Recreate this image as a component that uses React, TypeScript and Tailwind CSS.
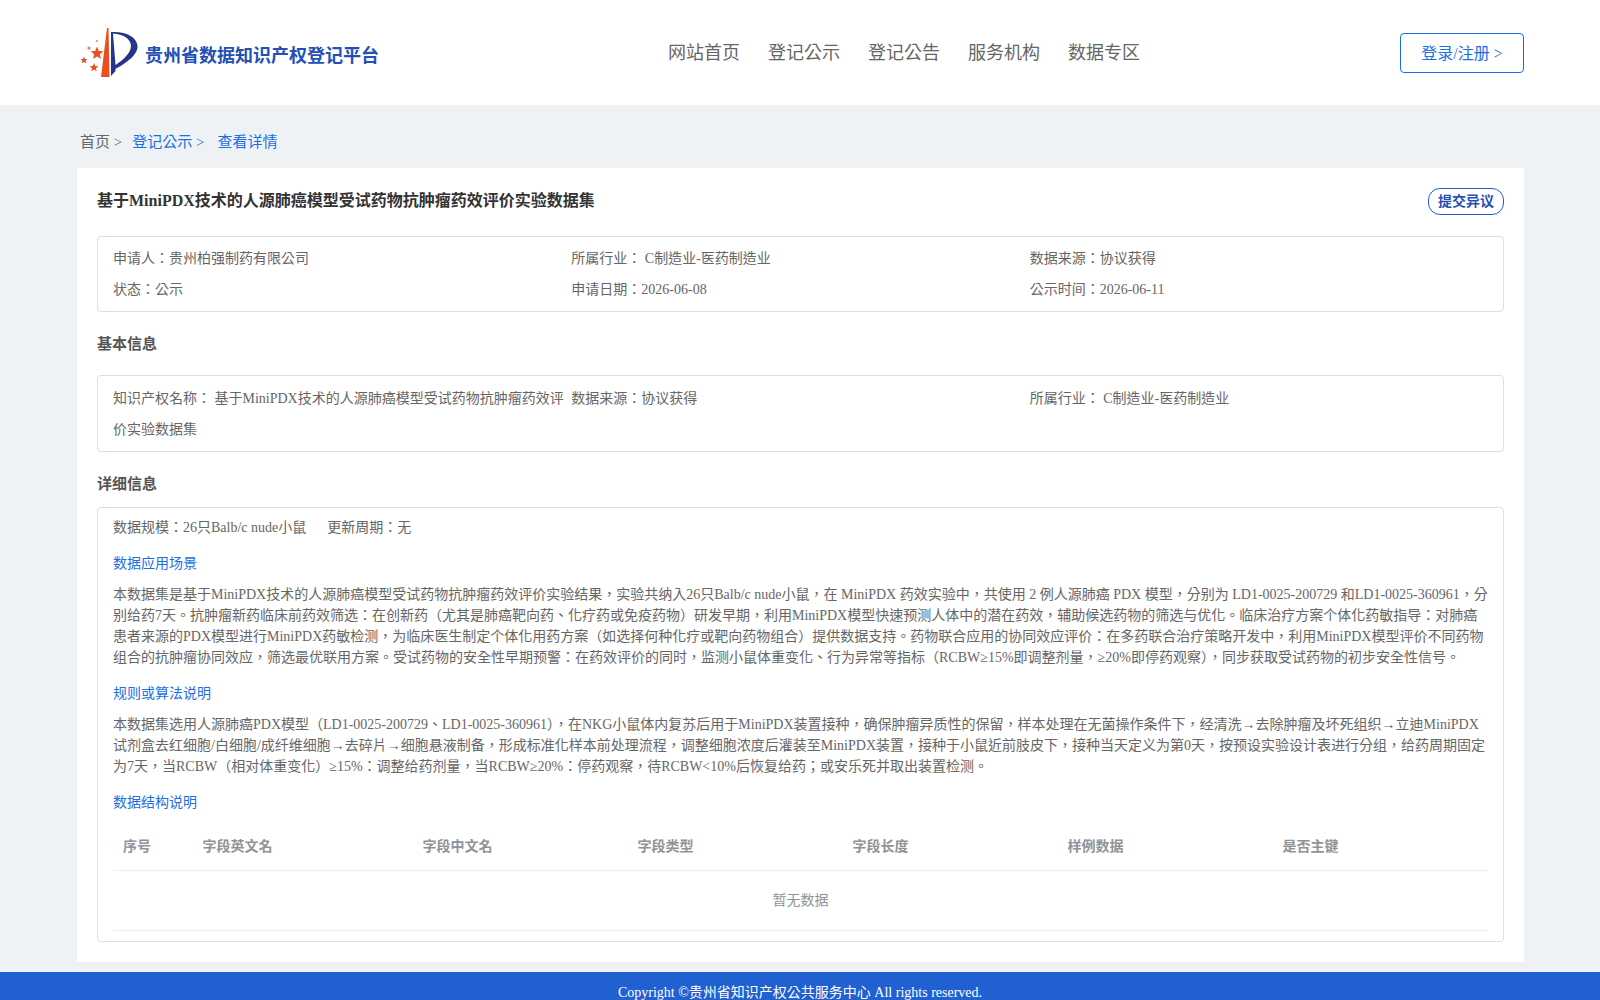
import React from "react";

const fontStack = { fontFamily: '"Liberation Serif", "Noto Sans CJK TC", serif' };

const navItems = ["网站首页", "登记公示", "登记公告", "服务机构", "数据专区"];
const columns = [
  { name: "序号", width: "w-[79.5px]" },
  { name: "字段英文名", width: "w-[220px]" },
  { name: "字段中文名", width: "w-[215px]" },
  { name: "字段类型", width: "w-[215px]" },
  { name: "字段长度", width: "w-[215px]" },
  { name: "样例数据", width: "w-[215px]" },
  { name: "是否主键", width: "flex-1" },
];

const Logo = () => (
  <svg width="58" height="50" viewBox="0 0 58 50" className="shrink-0">
    <path d="M21 50 L27 1 L28.5 1 L29.5 50 Z" fill="#e8501f" />
    <path
      d="M31 5 C46 4 57 10 57.5 19 C58 28 46 36 35.5 42 L35.5 44 L31 49 Z M33 6.5 L35.5 38 C43 33 51 26 51 19 C51 12 43 7 33 6.5 Z"
      fill="#26358c"
      fillRule="evenodd"
    />
    <polygon points="17,19.5 18.8,24 23.5,24.3 19.8,27.3 21,32 17,29.4 13,32 14.2,27.3 10.5,24.3 15.2,24" fill="#e8501f" />
    <polygon points="4,29.5 5,32 7.6,32.2 5.6,33.8 6.2,36.3 4,34.9 1.8,36.3 2.4,33.8 0.4,32.2 3,32" fill="#e8501f" />
    <polygon points="14,36 15.2,39 18.4,39.2 15.9,41.2 16.7,44.3 14,42.6 11.3,44.3 12.1,41.2 9.6,39.2 12.8,39" fill="#e8501f" />
    <circle cx="9" cy="21" r="1.6" fill="#ee7a55" />
    <circle cx="17" cy="14" r="1" fill="#ee7a55" />
  </svg>
);

const Header = () => (
  <header className="flex h-[105px] bg-white pl-[80px] pr-[76px]">
    <div className="flex w-[588px] items-start gap-[7px] pt-[27px]">
      <Logo />
      <span className="mt-[16px] text-[18px] leading-[27px] font-bold text-[#2450b5]">贵州省数据知识产权登记平台</span>
    </div>
    <nav className="flex gap-[28px] pt-[40px] text-[18px] leading-[26px] text-[#666666]">
      {navItems.map((item) => (
        <a key={item}>{item}</a>
      ))}
    </nav>
    <div className="ml-auto pt-[33px]">
      <button className="h-[40px] w-[124px] rounded border border-[#1a6fe3] pt-[1px] text-[16px] text-[#1a6fe3]">登录/注册 &gt;</button>
    </div>
  </header>
);

const InfoBox = ({ children, tall }: { children: React.ReactNode; tall?: boolean }) => (
  <div className={tall ? "grid grid-cols-3 rounded border border-[#dcdfe3] px-[15px] pt-[7px] pb-[6px] text-[14px] leading-[31px] text-[#666666]" : "grid grid-cols-3 rounded border border-[#dcdfe3] px-[15px] py-[6px] text-[14px] leading-[31px] text-[#666666]"}>
    {children}
  </div>
);

const SectionTitle = ({ children }: { children: React.ReactNode }) => (
  <h3 className="text-[15px] leading-[22px] font-bold text-[#555555]">{children}</h3>
);

const BlueLabel = ({ children }: { children: React.ReactNode }) => (
  <div className="text-[14px] leading-[21px] text-[#1a6fe3]">{children}</div>
);

export default function App() {
  return (
    <div className="h-[1000px] overflow-hidden bg-[#eff2f5]" style={fontStack}>
      <Header />
      <div className="pl-[77px] pr-[76px] pt-[26px] pb-[10px]">
        <div className="flex pl-[3px] text-[15px] leading-[23px] text-[#1a6fe3]">
          <span className="mr-[10px] text-[#666666]">首页 &gt;</span>
          <span className="mr-[13px]">登记公示 &gt;</span>
          <span>查看详情</span>
        </div>
        <main className="mt-[14px] bg-white px-[20px] pt-[20px] pb-[20px]">
          <div className="flex items-start justify-between">
            <h2 className="pt-[1px] text-[16px] leading-[24px] font-bold text-[#333333]">基于MiniPDX技术的人源肺癌模型受试药物抗肿瘤药效评价实验数据集</h2>
            <button className="h-[27px] w-[76px] rounded-[12px] border border-[#1a5fd0] text-[14px] font-bold text-[#2450b5]">提交异议</button>
          </div>
          <div className="mt-[21px]">
            <InfoBox>
              <div>申请人：贵州柏强制药有限公司</div>
              <div>所属行业： C制造业-医药制造业</div>
              <div>数据来源：协议获得</div>
              <div>状态：公示</div>
              <div>申请日期：2026-06-08</div>
              <div>公示时间：2026-06-11</div>
            </InfoBox>
          </div>
          <div className="mt-[21px] mb-[20px]">
            <SectionTitle>基本信息</SectionTitle>
          </div>
          <InfoBox tall>
            <div>知识产权名称： 基于MiniPDX技术的人源肺癌模型受试药物抗肿瘤药效评价实验数据集</div>
            <div>数据来源：协议获得</div>
            <div>所属行业： C制造业-医药制造业</div>
          </InfoBox>
          <div className="mt-[21px] mb-[12px]">
            <SectionTitle>详细信息</SectionTitle>
          </div>
          <section className="rounded border border-[#dcdfe3] px-[15px] pt-[9px] pb-[10px] text-[14px] leading-[21px] text-[#666666]">
            <div className="flex gap-[21px]">
              <span>数据规模：26只Balb/c nude小鼠</span>
              <span>更新周期：无</span>
            </div>
            <div className="mt-[15px]">
              <BlueLabel>数据应用场景</BlueLabel>
            </div>
            <p className="mt-[10px]">
              本数据集是基于MiniPDX技术的人源肺癌模型受试药物抗肿瘤药效评价实验结果，实验共纳入26只Balb/c nude小鼠，在 MiniPDX 药效实验中，共使用 2 例人源肺癌 PDX 模型，分别为 LD1-0025-200729 和LD1-0025-360961，分别给药7天。抗肿瘤新药临床前药效筛选：在创新药（尤其是肺癌靶向药、化疗药或免疫药物）研发早期，利用MiniPDX模型快速预测人体中的潜在药效，辅助候选药物的筛选与优化。临床治疗方案个体化药敏指导：对肺癌患者来源的PDX模型进行MiniPDX药敏检测，为临床医生制定个体化用药方案（如选择何种化疗或靶向药物组合）提供数据支持。药物联合应用的协同效应评价：在多药联合治疗策略开发中，利用MiniPDX模型评价不同药物组合的抗肿瘤协同效应，筛选最优联用方案。受试药物的安全性早期预警：在药效评价的同时，监测小鼠体重变化、行为异常等指标（RCBW≥15%即调整剂量，≥20%即停药观察），同步获取受试药物的初步安全性信号。
            </p>
            <div className="mt-[15px]">
              <BlueLabel>规则或算法说明</BlueLabel>
            </div>
            <p className="mt-[10px]">
              本数据集选用人源肺癌PDX模型（LD1-0025-200729、LD1-0025-360961），在NKG小鼠体内复苏后用于MiniPDX装置接种，确保肿瘤异质性的保留，样本处理在无菌操作条件下，经清洗→去除肿瘤及坏死组织→立迪MiniPDX试剂盒去红细胞/白细胞/成纤维细胞→去碎片→细胞悬液制备，形成标准化样本前处理流程，调整细胞浓度后灌装至MiniPDX装置，接种于小鼠近前肢皮下，接种当天定义为第0天，按预设实验设计表进行分组，给药周期固定为7天，当RCBW（相对体重变化）≥15%：调整给药剂量，当RCBW≥20%：停药观察，待RCBW&lt;10%后恢复给药；或安乐死并取出装置检测。
            </p>
            <div className="mt-[15px]">
              <BlueLabel>数据结构说明</BlueLabel>
            </div>
            <div className="flex h-[58px] items-center border-b border-[#ebeef5] pt-[9px] pl-[10px] font-bold text-[#909399]">
              {columns.map((c) => (
                <div key={c.name} className={c.width}>
                  {c.name}
                </div>
              ))}
            </div>
            <div className="flex h-[60px] items-center justify-center border-b border-[#ebeef5] text-[#909399]">暂无数据</div>
          </section>
        </main>
      </div>
      <footer className="flex h-[60px] justify-center bg-[#2160d0] pt-[10px] text-[14px] leading-[21px] text-white">
        Copyright ©贵州省知识产权公共服务中心 All rights reserved.
      </footer>
    </div>
  );
}
